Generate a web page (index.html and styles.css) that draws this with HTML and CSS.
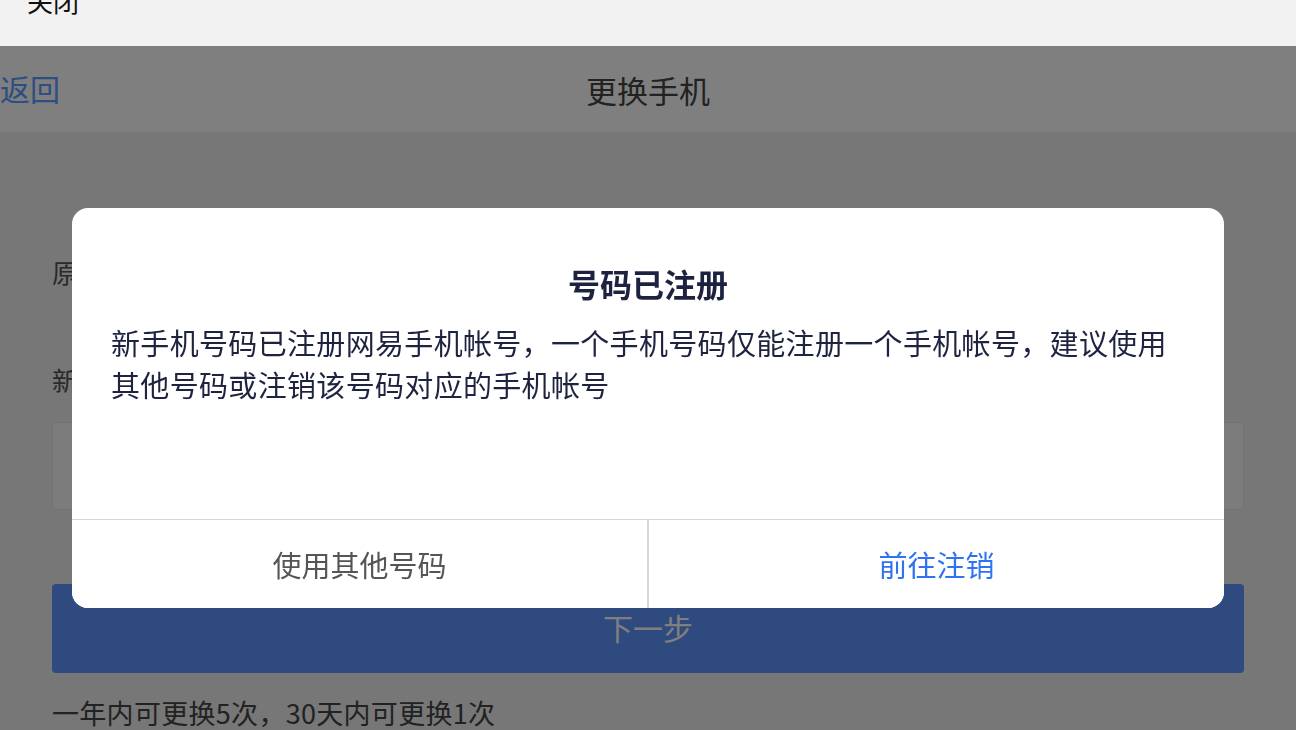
FILE: index.html
```html
<!DOCTYPE html>
<html lang="zh-CN">
<head>
  <meta charset="UTF-8">
  <meta name="viewport" content="width=device-width, initial-scale=1.0">
  <title>更换手机</title>
  <link rel="stylesheet" href="styles.css">
</head>
<body>

<!-- Browser close bar -->
<div class="close-bar"><span>关闭</span></div>

<!-- Page header -->
<header class="page-header">
  <a class="back-link">返回</a>
  <h1>更换手机</h1>
</header>

<!-- Change phone form -->
<main class="change-phone">
  <p class="field-label label-old">原手机号</p>
  <p class="field-label label-new">新手机号</p>
  <div class="phone-input"></div>
  <button class="next-btn">下一步</button>
  <p class="limit-note">一年内可更换5次，30天内可更换1次</p>
</main>

<!-- Registered number dialog -->
<div class="mask">
  <div class="dialog">
    <div class="dialog-body">
      <h2>号码已注册</h2>
      <p>新手机号码已注册网易手机帐号，一个手机号码仅能注册一个手机帐号，建议使用其他号码或注销该号码对应的手机帐号</p>
    </div>
    <div class="dialog-actions">
      <button class="btn-other">使用其他号码</button>
      <button class="btn-cancel-account">前往注销</button>
    </div>
  </div>
</div>

</body>
</html>
```

FILE: styles.css
```css
/* General Styles */
* {
  box-sizing: border-box;
}

body {
  font-family: "Noto Sans CJK SC", "Noto Sans", sans-serif;
  background-color: #eeeeee;
  margin: 0;
  padding: 0;
  height: 730px;
  overflow: hidden;
}

/* Close bar */
.close-bar {
  height: 46px;
  background-color: #f2f2f2;
  padding-left: 27px;
  font-size: 26px;
  line-height: 26px;
  color: #111;
  overflow: hidden;
}

.close-bar span {
  display: block;
  margin-top: -12px;
}

/* Header */
.page-header {
  height: 86px;
  background-color: #fff;
  display: flex;
  align-items: center;
  justify-content: center;
  position: relative;
}

.page-header h1 {
  margin: 0;
  font-size: 31px;
  font-weight: 400;
  color: #444;
}

.back-link {
  position: absolute;
  left: 0;
  top: -1px;
  line-height: 86px;
  font-size: 30px;
  color: #5a9cff;
}

/* Form */
.change-phone {
  padding: 0 52px;
}

.field-label {
  margin: 0;
  font-size: 26px;
  line-height: 36px;
  color: #555;
}

.label-old {
  margin-top: 122px;
}

.label-new {
  margin-top: 72px;
}

.phone-input {
  margin-top: 24px;
  height: 88px;
  background-color: #f8f9fb;
  border: 1px solid #e2e3e6;
  border-radius: 4px;
}

.next-btn {
  display: block;
  width: 100%;
  margin-top: 74px;
  height: 89px;
  padding: 0 0 4px;
  border: none;
  border-radius: 4px;
  background-color: #5c94fc;
  color: #fff;
  font-family: inherit;
  font-size: 30px;
}

.limit-note {
  margin: 22px 0 0;
  font-size: 27px;
  line-height: 36px;
  letter-spacing: 0.3px;
  color: #444;
}

/* Dialog */
.mask {
  position: fixed;
  top: 46px;
  left: 0;
  right: 0;
  bottom: 0;
  background-color: rgba(0, 0, 0, 0.5);
  display: flex;
  justify-content: center;
  align-items: flex-start;
  padding-top: 162px;
}

.dialog {
  width: 1152px;
  background: #fff;
  border-radius: 16px;
  overflow: hidden;
}

.dialog-body {
  height: 312px;
  padding: 55px 50px 0 39px;
  border-bottom: 1px solid #d6d6d6;
}

.dialog-body h2 {
  margin: 0;
  text-align: center;
  font-size: 32px;
  line-height: 40px;
  font-weight: 700;
  color: #1c2240;
  padding-left: 11px;
}

.dialog-body p {
  margin: 18px 0 0;
  font-size: 29px;
  line-height: 42px;
  letter-spacing: 0.33px;
  color: #1e2340;
}

.dialog-actions {
  display: flex;
  height: 88px;
}

.dialog-actions button {
  flex: 1;
  border: none;
  background: #fff;
  font-family: inherit;
  font-size: 29px;
  cursor: pointer;
}

.btn-other {
  color: #555;
  border-right: 2px solid #d6d6d6 !important;
}

.btn-cancel-account {
  color: #2f72f2;
}
```
